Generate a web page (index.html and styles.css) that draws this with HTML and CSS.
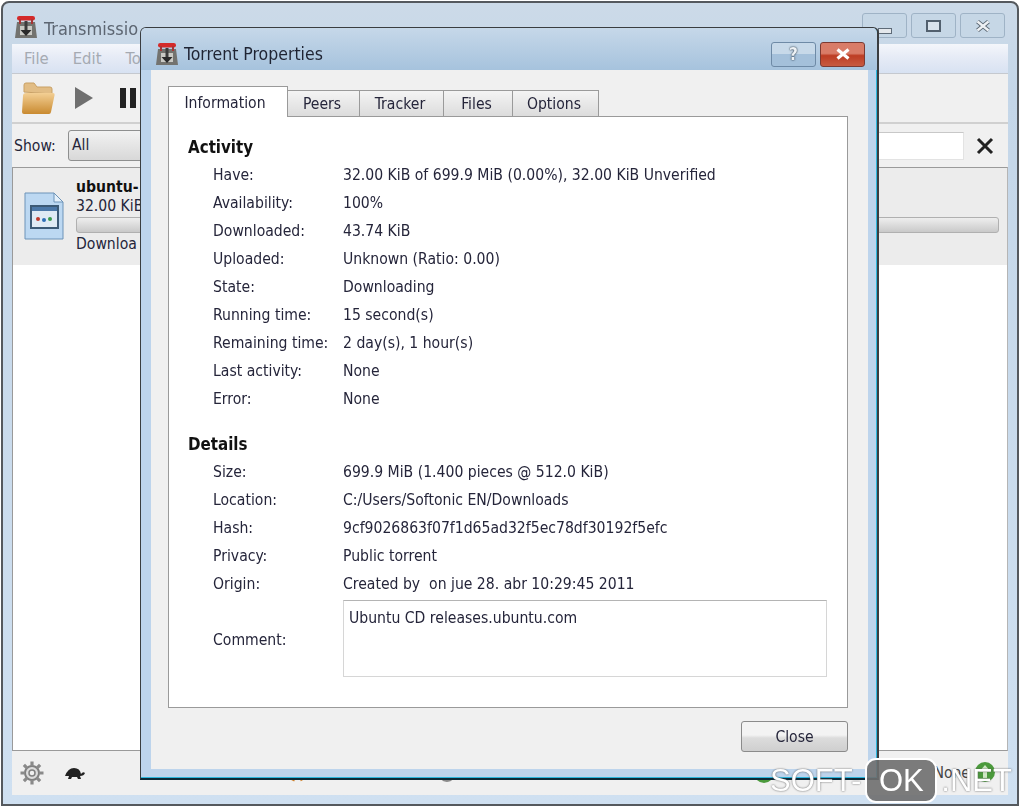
FILE: index.html
```html
<!DOCTYPE html>
<html lang="en">
<head>
<meta charset="utf-8">
<title>Torrent Properties</title>
<link rel="stylesheet" href="styles.css">
</head>
<body>
<svg class="defs" width="0" height="0">
  <defs>
    <linearGradient id="folder" x1="0" y1="0" x2="0" y2="1">
      <stop offset="0" stop-color="#f3cf94"/><stop offset="1" stop-color="#c98a30"/>
    </linearGradient>
  </defs>
  <symbol id="logo" viewBox="0 0 24 24">
    <path d="M3 7h18l2 16H1z" fill="#73736f"/>
    <rect x="6" y="11" width="12" height="9" fill="#c9c9c4"/>
    <path d="M12 6v9" stroke="#3c3c3c" stroke-width="3"/>
    <path d="M6.500 15h11L12 21z" fill="#2a2a2a"/>
    <rect x="3" y="1" width="18" height="4.500" rx="2.200" fill="#d42a2a"/>
    <path d="M6 4v5M18 4v5" stroke="#a83434" stroke-width="2"/>
  </symbol>
</svg>

<section class="window main-window">
  <header class="main-title">
    <svg class="logo" width="24" height="24"><use href="#logo"/></svg>
    <span class="main-name">Transmissio</span>
    <span class="wbtn wbtn-min"><svg width="14" height="6" viewBox="0 0 14 6"><rect x=".5" y=".5" width="13" height="5" fill="#e4e8ec" stroke="#5e6b78"/></svg></span>
    <span class="wbtn"><svg width="15" height="12" viewBox="0 0 15 12"><rect x="1" y="1" width="13" height="10" fill="#d9e3ec" stroke="#52606e" stroke-width="2"/></svg></span>
    <span class="wbtn"><svg width="16" height="12" viewBox="0 0 16 12"><path d="M2.500 1.500l11 9M13.500 1.500l-11 9" stroke="#5c6874" stroke-width="4.200"/><path d="M2.500 1.500l11 9M13.500 1.500l-11 9" stroke="#eef1f4" stroke-width="2.400"/></svg></span>
  </header>
  <div class="main-client">
    <nav class="menu"><span>File</span><span>Edit</span><span>To</span></nav>
    <div class="toolbar">
      <svg width="36" height="36" viewBox="0 0 36 36">
        <path d="M4 12V5q0-2 2-2h8l3 4h13q2 0 2 2v5z" fill="#e2bd85" stroke="#c9a165"/>
        <path d="M6 13h27q2 0 1.600 2l-3.600 17q-.4 2-2 2H4q-2 0-2-2l1-16q0-3 3-3z" fill="url(#folder)"/>
      </svg>
      <svg class="play" width="20" height="24" viewBox="0 0 20 24"><path d="M1 1l18 11L1 23z" fill="#6f6f6f"/></svg>
      <svg class="pause" width="18" height="22" viewBox="0 0 18 22"><path d="M1 1h6v20H1zM11 1h6v20h-6z" fill="#222"/></svg>
    </div>
    <div class="filter">
      <span class="show">Show:</span>
      <span class="combo">All</span>
      <span class="search"></span>
      <svg class="clear" width="20" height="20" viewBox="0 0 20 20"><path d="M3 3l14 14M17 3L3 17" stroke="#222" stroke-width="3"/></svg>
    </div>
    <div class="list">
      <div class="torrent">
        <svg class="file" width="40" height="48" viewBox="0 0 40 48">
          <path d="M1 1h29l9 9v37H1z" fill="#bcd8f2" stroke="#6c93b8"/>
          <path d="M30 1v9h9z" fill="#e4f0fa" stroke="#6c93b8"/>
          <rect x="7" y="14" width="27" height="22" fill="#dfeaf4" stroke="#3c5a76" stroke-width="2"/>
          <rect x="8" y="15" width="25" height="4" fill="#4c78a8"/>
          <circle cx="14" cy="27" r="2" fill="#c0392b"/><circle cx="20" cy="28" r="2" fill="#2f6fb5"/><circle cx="26" cy="27" r="2" fill="#3a9a4c"/>
        </svg>
        <div class="torrent-body">
          <strong>ubuntu-</strong>
          <span>32.00 KiB</span>
          <div class="progress"></div>
          <span>Downloa</span>
        </div>
      </div>
    </div>
    <footer class="status">
      <svg width="24" height="24" viewBox="0 0 24 24">
        <circle cx="12" cy="12" r="7" fill="#dcdcdc" stroke="#808080" stroke-width="2"/>
        <circle cx="12" cy="12" r="3" fill="#f0f0f0" stroke="#808080" stroke-width="1.500"/>
        <path d="M12 .5v4.500M12 19v4.500M.5 12H5M19 12h4.500M3.900 3.900l3.200 3.200M16.900 16.900l3.200 3.200M20.100 3.900l-3.200 3.200M7.100 16.900l-3.200 3.200" stroke="#8a8a8a" stroke-width="3.200"/>
      </svg>
      <svg class="turtle" width="20" height="12" viewBox="0 0 20 12">
        <path d="M0 9q3-8 9-8t7 6q2-3 4-1-1 3-5 3l1 3h-3l-1-2H7l-1 2H3l1-3z" fill="#222"/>
      </svg>
      <svg class="hidden-a" width="16" height="22" viewBox="0 0 16 22"><circle cx="8" cy="11" r="8" fill="none" stroke="#d0812a" stroke-width="2" stroke-dasharray="9 6"/></svg>
      <svg class="hidden-b" width="18" height="22" viewBox="0 0 18 22"><circle cx="9" cy="11" r="8" fill="none" stroke="#8a8a8a" stroke-width="2"/></svg>
      <svg class="hidden-c" width="24" height="22" viewBox="0 0 24 22"><circle cx="12" cy="11" r="10" fill="#4b9a3c"/></svg>
      <span class="spacer"></span>
      <span class="net-text">None</span>
      <svg class="net" width="24" height="24" viewBox="0 0 24 24"><circle cx="12" cy="12" r="10" fill="#4b9a3c"/><path d="M12 5l6 7h-4v6h-4v-6H6z" fill="#cfe8c4"/></svg>
    </footer>
  </div>
</section>

<section class="window dialog">
  <header class="dialog-title">
    <svg class="logo" width="24" height="24"><use href="#logo"/></svg>
    <span class="dialog-name">Torrent Properties</span>
    <span class="caption help">?</span>
    <span class="caption close-x">
      <svg width="16" height="12" viewBox="0 0 16 12"><path d="M2.500 1.500l11 9M13.500 1.500l-11 9" stroke="#fff" stroke-width="3.200"/></svg>
    </span>
  </header>
  <div class="dialog-client">
    <div class="tabs">
      <span class="tab active tab-info">Information</span>
      <span class="tab tab-peers">Peers</span>
      <span class="tab tab-tracker">Tracker</span>
      <span class="tab tab-files">Files</span>
      <span class="tab tab-options">Options</span>
    </div>
    <div class="panel">
      <h2>Activity</h2>
      <dl class="rows">
        <dt>Have:</dt><dd>32.00 KiB of 699.9 MiB (0.00%), 32.00 KiB Unverified</dd>
        <dt>Availability:</dt><dd>100%</dd>
        <dt>Downloaded:</dt><dd>43.74 KiB</dd>
        <dt>Uploaded:</dt><dd>Unknown (Ratio: 0.00)</dd>
        <dt>State:</dt><dd>Downloading</dd>
        <dt>Running time:</dt><dd>15 second(s)</dd>
        <dt>Remaining time:</dt><dd>2 day(s), 1 hour(s)</dd>
        <dt>Last activity:</dt><dd>None</dd>
        <dt>Error:</dt><dd>None</dd>
      </dl>
      <h2 class="details">Details</h2>
      <dl class="rows rows-details">
        <dt>Size:</dt><dd>699.9 MiB (1.400 pieces @ 512.0 KiB)</dd>
        <dt>Location:</dt><dd>C:/Users/Softonic EN/Downloads</dd>
        <dt>Hash:</dt><dd>9cf9026863f07f1d65ad32f5ec78df30192f5efc</dd>
        <dt>Privacy:</dt><dd>Public torrent</dd>
        <dt>Origin:</dt><dd>Created by &nbsp;on jue 28. abr 10:29:45 2011</dd>
        <dt class="comment-label">Comment:</dt><dd class="comment">Ubuntu CD releases.ubuntu.com</dd>
      </dl>
    </div>
    <div class="actions"><button class="close-btn" type="button">Close</button></div>
  </div>
</section>

<div class="watermark"><span>SOFT-</span><span class="ok">OK</span><span>.NET</span></div>
</body>
</html>
```
FILE: styles.css
```css
* { box-sizing: border-box; }
html, body { margin: 0; height: 100%; }
body {
  width: 1020px;
  height: 807px;
  overflow: hidden;
  position: relative;
  background: #fff;
  font-family: "DejaVu Sans Condensed", "DejaVu Sans", sans-serif;
  font-stretch: condensed;
  font-size: 15.600px;
  color: #25253a;
}
.defs { position: absolute; }
.window { position: absolute; filter: blur(.35px); }

.main-window {
  left: 1px;
  top: 1px;
  width: 1018px;
  height: 805px;
  border: 2px solid #55595e;
  border-radius: 8px 8px 0 0;
  background: linear-gradient(#ccdae8, #c4d6e8 90px, #cfe0f1);
  display: flex;
  flex-direction: column;
  padding: 0 9px 9px;
}
.main-title {
  height: 41px;
  display: flex;
  align-items: center;
  gap: 4px;
  padding: 7px 3px 0 2px;
  font-size: 18px;
  color: #5d6672;
}
.main-name { flex: 1; margin: 2px 0 0 2px; }
.wbtn {
  width: 45px;
  height: 25px;
  margin-top: -3px;
  display: flex;
  align-items: center;
  justify-content: center;
  border: 1px solid #9fb3c6;
  border-radius: 3px;
  background: #c6d7e6;
}
.wbtn-min { padding-top: 10px; }
.main-client {
  flex: 1;
  display: flex;
  flex-direction: column;
  background: #f0f0f0;
  min-height: 0;
}
.menu {
  height: 30px;
  display: flex;
  gap: 24px;
  align-items: center;
  padding-left: 12px;
  color: #a5aab2;
  background: linear-gradient(#f4f6fb, #e6ebf6 45%, #d8e2f2);
  border-bottom: 1px solid #c5c9cf;
  font-size: 16.500px;
}
.toolbar {
  height: 50px;
  display: flex;
  align-items: center;
  padding-left: 8px;
  border-bottom: 2px solid #d0d0d0;
}
.play { margin-left: 18px; }
.pause { margin-left: 25px; }
.filter {
  height: 43px;
  display: flex;
  align-items: center;
  padding-left: 2px;
}
.show { width: 54px; }
.combo {
  width: 300px;
  height: 31px;
  padding-left: 3px;
  line-height: 28px;
  border: 1px solid #8e8f8f;
  border-radius: 3px;
  background: linear-gradient(#f2f2f2, #d8d8d8);
}
.search {
  width: 596px;
  height: 28px;
  background: #fff;
  border: 1px solid #e3e3e3;
  border-top-color: #c8c8c8;
}
.clear { margin-left: 11px; }
.list {
  flex: 1;
  background: #fff;
  border: 1px solid #9a9a9a;
  border-right-color: #b5b5b5;
  min-height: 0;
}
.torrent {
  height: 97px;
  background: #ececec;
  display: flex;
  padding: 24px 8px 0 11px;
  gap: 12px;
}
.torrent-body {
  flex: 1;
  display: flex;
  flex-direction: column;
  margin-top: -14px;
  line-height: 19px;
  white-space: nowrap;
  color: #25253a;
}
.torrent-body strong { color: #111; }
.progress {
  height: 16px;
  margin: 1px 0 2px;
  border: 1px solid #b0b0b0;
  border-radius: 3px;
  background: linear-gradient(#eee, #c9c9c9);
}
.status {
  height: 44px;
  display: flex;
  align-items: center;
  padding: 0 8px;
}
.turtle { margin-left: 21px; }
.hidden-a { margin-left: 204px; }
.hidden-b { margin-left: 133px; }
.hidden-c { margin-left: 296px; }
.spacer { flex: 1; }
.net-text { color: #444; margin-right: 3px; }
.net { margin-top: -2px; margin-right: 3px; }

.dialog {
  left: 140px;
  top: 27px;
  width: 739px;
  height: 753px;
  border: 1px solid #3a3d40;
  border-width: 1px 2px 2px 1px;
  border-bottom-color: #0c2a38;
  border-radius: 6px 6px 0 0;
  background: #bdd4ec;
  display: flex;
  flex-direction: column;
  padding: 0 9px 9px 10px;
  box-shadow: inset -1px -1px 0 #2cb6dc;
}
.dialog-title {
  height: 42px;
  margin: 0 -9px 0 -10px;
  padding: 10px 12px 0 14px;
  display: flex;
  align-items: center;
  gap: 5px;
  font-size: 17.500px;
  color: #1f2433;
  background: linear-gradient(#c6d8e9, #a6c3dd);
  border-radius: 5px 5px 0 0;
}
.dialog-name { flex: 1; }
.caption {
  width: 45px;
  height: 25px;
  display: flex;
  align-items: center;
  justify-content: center;
  border: 1px solid #6e8aa6;
  border-radius: 3px;
}
.help {
  margin-right: -1px;
  font-weight: 700;
  font-size: 17px;
  color: #eef2f5;
  background: linear-gradient(#c7d9e9 50%, #a4c0da 50%);
  text-shadow: 0 0 2px #2c3c4c, 0 0 1px #2c3c4c;
}
.close-x {
  background: linear-gradient(#d97c68 45%, #bd3d24 55%, #c75a40);
  border-color: #7c3a32;
}
.dialog-client {
  flex: 1;
  display: flex;
  flex-direction: column;
  background: #f0f0f0;
  padding: 17px 20px 10px 17px;
  min-height: 0;
}
.tabs {
  display: flex;
  align-items: flex-end;
  height: 30px;
  position: relative;
  z-index: 1;
  margin-bottom: -1px;
}
.tab {
  height: 27px;
  margin-left: -1px;
  padding: 1px 3px 0 0;
  display: flex;
  align-items: center;
  justify-content: center;
  border: 1px solid #9a9a9a;
  background: linear-gradient(#f4f4f4, #dcdcdc);
}
.tab.active {
  height: 31px;
  margin-left: 0;
  background: #fff;
  border-bottom: 0;
  padding: 1px 6px 0 0;
}
.tab-info { width: 120px; }
.tab-peers { width: 73px; }
.tab-tracker { width: 85px; }
.tab-files { width: 70px; }
.tab-options { width: 87px; }
.panel {
  height: 592px;
  background: #fff;
  border: 1px solid #9a9a9a;
  padding: 19px 19px 0;
}
h2 {
  margin: 0;
  font-size: 16.800px;
  line-height: 22px;
  font-weight: 700;
  color: #111;
}
.details { margin-top: 20px; }
.rows {
  margin: 3px 0 0;
  padding-left: 25px;
  display: grid;
  grid-template-columns: 130px 484px;
  grid-auto-rows: 28px;
  align-items: center;
  line-height: 28px;
  white-space: nowrap;
}
.rows-details { margin-top: 3px; }
dt, dd { margin: 0; }
.comment {
  grid-row: span 3;
  height: 77px;
  margin-top: 2px;
  align-self: start;
  border: 1px solid #d6d6d6;
  border-top-color: #b4b4b4;
  padding: 2px 5px;
  line-height: 30px;
}
.comment-label { grid-row: span 3; align-self: start; margin-top: 28px; }
.actions { flex: 1; display: flex; justify-content: flex-end; align-items: flex-start; padding-top: 13px; }
.close-btn {
  width: 107px;
  height: 31px;
  font: inherit;
  color: #25253a;
  border: 1px solid #8b8b8b;
  border-radius: 3px;
  background: linear-gradient(#f3f3f3 45%, #dcdcdc 55%, #cfcfcf);
}

.watermark {
  position: absolute;
  left: 770px;
  top: 758px;
  display: flex;
  align-items: center;
  height: 45px;
  font-family: "Liberation Sans", Arial, sans-serif;
  font-size: 31px;
  color: #fff;
  text-shadow: 0 0 2px #555;
}
.ok {
  width: 72px;
  height: 45px;
  margin: 0 4px;
  line-height: 41px;
  text-align: center;
  background: rgba(110, 110, 110, .9);
  border: 2px solid #fff;
  border-radius: 11px;
  text-shadow: none;
}
```
